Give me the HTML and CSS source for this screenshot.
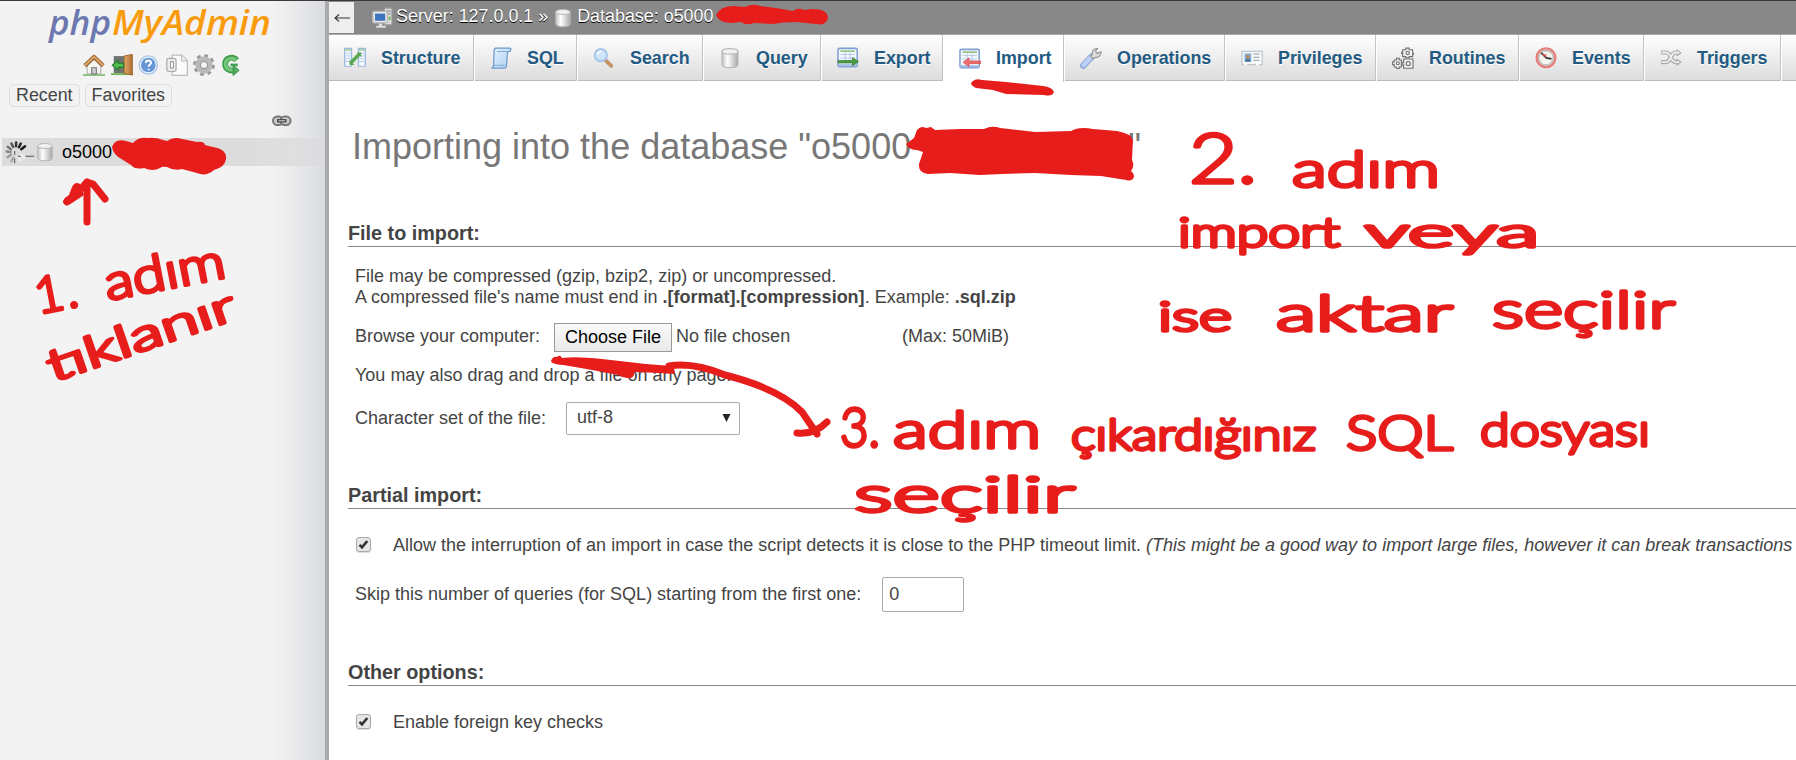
FILE: index.html
```html
<!DOCTYPE html>
<html lang="en">
<head>
<meta charset="utf-8">
<title>phpMyAdmin</title>
<link rel="stylesheet" href="styles.css">
</head>
<body>
<svg class="defs" width="0" height="0" aria-hidden="true">
  <defs>
    <linearGradient id="cyl" x1="0" x2="1" y1="0" y2="0"><stop offset="0" stop-color="#c4c4c4"/><stop offset=".35" stop-color="#fff"/><stop offset="1" stop-color="#a9a9a9"/></linearGradient>
    <linearGradient id="blue" x1="0" x2="1" y1="0" y2="1"><stop offset="0" stop-color="#eaf4ff"/><stop offset="1" stop-color="#a9cdf0"/></linearGradient>
    <linearGradient id="door" x1="0" x2="1" y1="0" y2="0"><stop offset="0" stop-color="#e3a765"/><stop offset="1" stop-color="#b0713a"/></linearGradient>
    <symbol id="db" viewBox="0 0 16 16"><path d="M2.2 3.2v9.6c0 3 11.6 3 11.6 0V3.2z" fill="url(#cyl)" stroke="#b5b5b5" stroke-width=".8"/><ellipse cx="8" cy="3.2" rx="5.8" ry="2" fill="#f1f1f1" stroke="#b9b9b9" stroke-width=".8"/></symbol>
    <symbol id="sheet" viewBox="0 0 16 16"><rect x=".7" y="1" width="14" height="13.3" rx="1" fill="#f3f8ff" stroke="#7f9fd2" stroke-width="1.1"/><path d="M2.5 3h10.5" stroke="#9bc58a" stroke-width="1.3"/><path d="M2.5 5.5h10.5M2.5 8h10.5M6 4v8M9.5 4v8" stroke="#b9cde9" stroke-width=".8"/><path d="M1.3 13.2h12.8" stroke="#a9bfe6" stroke-width="1.6"/></symbol>
  </defs>
</svg>
<div class="page">
  <aside class="nav">
    <svg class="logo" viewBox="0 0 228 34"><text class="logo-php" x="1" y="26" textLength="62" lengthAdjust="spacingAndGlyphs">php</text><text class="logo-my" x="64" y="26" textLength="159" lengthAdjust="spacingAndGlyphs">MyAdmin</text></svg>
    <div class="nav-icons">
      <svg viewBox="0 0 16 16"><path d="M0 14.8h16v1H0z" fill="#5fb34c"/><path d="M3 8v6.5h10V8L8 3.5z" fill="#f4f4f2" stroke="#a8a8a8" stroke-width=".7"/><path d="M1.3 8.6L8 2.2l6.7 6.4" fill="none" stroke="#8d5a2c" stroke-width="3" stroke-linejoin="round"/><path d="M1.3 8.4L8 2l6.7 6.4" fill="none" stroke="#d9a263" stroke-width="1.7"/><path d="M6.3 14.5V10h3.4v4.5z" fill="#cfcfcf" stroke="#777" stroke-width=".8"/></svg>
      <svg viewBox="0 0 16 16"><path d="M2 1.5h9V14H2z" fill="#6e7470"/><path d="M0 14h16v1.3H0z" fill="#6db353"/><path d="M9.5 1.5L15.5.3v15l-6-1.2z" fill="url(#door)" stroke="#9b662f" stroke-width=".7"/><path d="M1 8.2l4.2-3.7v2.2h4v3H5.200v2.200z" fill="#4fc24e" stroke="#267d2c" stroke-width=".8"/></svg>
      <svg viewBox="0 0 16 16"><circle cx="7.500" cy="8" r="6.600" fill="#edf4fd" stroke="#a9c5e8"/><circle cx="7.500" cy="8" r="5.300" fill="#6596d6"/><path d="M5.700 6.600c0-2.500 3.900-2.300 3.800-.2C9.500 7.700 7.700 7.700 7.700 9.300M7.700 10.700v1.200" fill="none" stroke="#fff" stroke-width="1.400"/></svg>
      <svg viewBox="0 0 16 16"><path d="M4.500.8h7l4 4v10.700h-11z" fill="#fbfbfb" stroke="#bdbdbd" stroke-width=".9"/><path d="M11.300.9v4.200h4" fill="#eee" stroke="#bdbdbd" stroke-width=".8"/><rect x=".6" y="3.300" width="6.700" height="9.300" rx="1.500" fill="#f2f2f2" stroke="#b0b0b0"/><rect x="3.200" y="5.600" width="2.200" height="4.600" fill="#fff" stroke="#999" stroke-width=".8"/></svg>
      <svg viewBox="0 0 16 16"><circle cx="8" cy="8" r="6.600" fill="none" stroke="#969696" stroke-width="2.600" stroke-dasharray="2.600 2.580"/><circle cx="8" cy="8" r="4.500" fill="none" stroke="#b9b9b9" stroke-width="3.600"/><circle cx="8" cy="8" r="2.600" fill="#f3f3f3" stroke="#909090" stroke-width=".8"/></svg>
      <svg viewBox="0 0 16 16"><path d="M11.500 4.500C8.500 1 3 2.800 3 7.300c0 3.600 3.200 5.200 6.500 4.600" fill="none" stroke="#3c9a48" stroke-width="4.200"/><path d="M11.300 4.600C8.500 1.500 3.200 3.200 3.200 7.300c0 3.400 3 4.800 6 4.400" fill="none" stroke="#72c878" stroke-width="2.400"/><path d="M8.800 8.300l4.400 3.600-4.400 3.800z" fill="#52ae5c" stroke="#38904a" stroke-width=".7"/><path d="M6.800 8h5.400" fill="none" stroke="#45a253" stroke-width="2"/></svg>
    </div>
    <div class="nav-buttons"><button>Recent</button><button>Favorites</button></div>
    <div class="nav-link"><svg viewBox="0 0 20 12"><rect x="1" y="1.500" width="10" height="8.500" rx="4.200" fill="#ccc" stroke="#777" stroke-width="2"/><rect x="8.500" y="1.500" width="10" height="8.500" rx="4.200" fill="#ccc" stroke="#777" stroke-width="2"/><path d="M5 5.800h9.500" stroke="#444" stroke-width="3.400"/><path d="M6.500 5.800h6.500" stroke="#ddd"/></svg></div>
    <div class="tree-row">
      <svg class="spinner" viewBox="0 0 34 28"><g stroke-width="2.600" stroke-linecap="round"><path d="M15 8V4" stroke="#333"/><path d="M18 9l2-4" stroke="#222"/><path d="M20.500 11l4-3" stroke="#111"/><path d="M12 8.500L10 5" stroke="#555"/><path d="M9.500 11L6 8.500" stroke="#777"/><path d="M9 14l-4-.5" stroke="#888"/><path d="M9.500 17L6 19.500" stroke="#999"/><path d="M12 20l-2 4" stroke="#aaa"/><path d="M20 17l4 3M18 20l2 3" stroke="#eee"/></g><path d="M13.500 13v4M13.500 21v5M17 18.500h3M25 18.500h9" stroke="#444"/></svg>
      <svg class="tree-db"><use href="#db"/></svg>
      <span>o5000</span>
    </div>
  </aside>
  <main class="main">
    <header class="crumbs">
      <button class="back"><svg viewBox="0 0 18 12"><path d="M17 6H2M6 2.500L2 6 6 9.500" fill="none" stroke="#333" stroke-width="1.100"/></svg></button>
      <svg class="server" viewBox="0 0 16 16"><path d="M9 .8h5.500V13H9z" fill="#ddd" stroke="#999" stroke-width=".8"/><path d="M10.500 3h3M10.500 5h3" stroke="#8a8a8a"/><path d="M12.800 7v2.500" stroke="#65b44f" stroke-width="1.400"/><rect x=".6" y="3.200" width="10.600" height="8.300" rx=".8" fill="#e8e8e8" stroke="#b6b6b6"/><rect x="2.200" y="4.800" width="7.400" height="5.200" fill="#3e73bd"/><path d="M5 12v1.700H3V15h7v-1.300H7.500V12z" fill="#ddd"/></svg>
      <span>Server: 127.0.0.1 »</span>
      <svg class="crumb-db"><use href="#db"/></svg>
      <span>Database: o5000</span>
    </header>
    <nav class="tabs">
      <a class="tab t-structure"><svg viewBox="0 0 16 16"><path d="M.5 1h5v13h-5zM10.500 1h5v13h-5z" fill="#f4f9ff" stroke="#9ab9df" stroke-width=".9"/><path d="M.8 2.200h4.500M10.700 2.200h4.500" stroke="#9bca8d" stroke-width="1.200"/><path d="M1 4.500h4M1 6.500h4M1 8.500h4M1 10.500h4M11 4.500h4M11 6.500h4M11 8.500h4M11 10.500h4" stroke="#b4cbe8" stroke-width=".7"/><path d="M5 11.500L11.300 5" stroke="#59a84e" stroke-width="2.600"/><path d="M4 9.500v3.500h3.500zM9.300 4h3.200v3.400z" fill="#59a84e"/></svg>Structure</a>
      <a class="tab t-sql"><svg viewBox="0 0 16 16"><path d="M3.500.8h11c1 0 1 2.500-.8 2.500h-.9L12 13.500c0 1.200-.7 1.800-1.800 1.800H1c1.200 0 1.500-1 1.600-2L3 2.500C3 1 3.500.8 4.500.8z" fill="url(#blue)" stroke="#6b9bcd" stroke-width=".9"/><path d="M5 3.300h8.500M2.500 13.300h8" stroke="#82abd7" stroke-width=".8"/></svg>SQL</a>
      <a class="tab t-search"><svg viewBox="0 0 16 16"><path d="M9 9.500l4.300 4.300" stroke="#c39468" stroke-width="2.800" stroke-linecap="round"/><circle cx="5.700" cy="5.900" r="4.500" fill="#cfe4fb" stroke="#a5c6ea" stroke-width="1.400"/><path d="M3.300 5.500c.2-1.700 1.500-2.300 3-2.200" stroke="#fff" fill="none"/></svg>Search</a>
      <a class="tab t-query"><svg><use href="#db"/></svg>Query</a>
      <a class="tab t-export"><svg viewBox="0 0 16 16"><use href="#sheet"/><path d="M.8 9.800h10.500V7.600l4.300 3-4.300 3v-2H.8z" fill="#4a9c42" stroke="#347e31" stroke-width=".5"/></svg>Export</a>
      <a class="tab active t-import"><svg viewBox="0 0 16 16"><use href="#sheet"/><path d="M15.700 9.500H7.300V7.200L3 10.400l4.300 3.100v-2.200h8.400z" fill="#f0706d" stroke="#d94d4d" stroke-width=".6"/></svg>Import</a>
      <a class="tab t-operations"><svg viewBox="0 0 16 16"><path d="M2.500 13.500L8.500 7" stroke="#8ca8dc" stroke-width="4.800" stroke-linecap="round"/><path d="M2.700 13.100L8.500 7" stroke="#bdd0f3" stroke-width="3.200" stroke-linecap="round"/><path d="M7.600 6.500L9 5.500c-.5-2.500 1-4.500 3.700-4.400L11.200 3l1.500 1.700L15.300 3.500c.3 2.600-2 4.500-4.300 4l-1.500 1.300z" fill="#ddd" stroke="#919191" stroke-width=".8"/></svg>Operations</a>
      <a class="tab t-privileges"><svg viewBox="0 0 16 16"><rect x=".7" y="3.200" width="14.700" height="9.600" fill="#f8fafc" stroke="#c5c9ce"/><path d="M2.500 4.700h5v6h-5z" fill="#79b1e2"/><circle cx="5" cy="7" r="1.500" fill="#bd8b5b"/><path d="M3 10.700c0-3 4-3 4 0z" fill="#4f6f96"/><path d="M9 5.200h4.500M9 7.500h4.500M9 9.800h4.500" stroke="#a4adb5" stroke-width=".9"/><path d="M2.500 12.500h2M11 12.500h2" stroke="#fff" stroke-width="1.500"/></svg>Privileges</a>
      <a class="tab t-routines"><svg viewBox="0 0 16 16"><g fill="#f0f0f0" stroke="#707070" stroke-width=".8"><path d="M10 .8h2.500v1.200H15v2.500h.8v1H15V7h-2.500v.8H10V7H7.800V4.700H7v-1h.8V2H10z"/><circle cx="11.400" cy="4.300" r="1.200"/><path d="M3.300 8.200h2v1.300h1.500v5H5.300v1.200h-2v-1.200H1.600v-1.700H.5v-2h1.100V9.500h1.700z"/><circle cx="4.200" cy="11.800" r="1.100"/><path d="M8.500 8.700h6.800v6.700H8.500v-2.200H7.800v-2h.7z"/><circle cx="11.800" cy="12" r="1.500"/></g></svg>Routines</a>
      <a class="tab t-events"><svg viewBox="0 0 16 16"><circle cx="8" cy="7.800" r="6.800" fill="#f5f5f0" stroke="#e77b77" stroke-width="1.700"/><circle cx="8" cy="7.800" r="5.300" fill="none" stroke="#b9b9b4"/><path d="M4.500 4.200L8.300 7.900l3.700.7" fill="none" stroke="#333" stroke-width="1.300"/><path d="M4.500 5l3 2.400 1-2z" fill="#d85850"/></svg>Events</a>
      <a class="tab t-triggers"><svg viewBox="0 0 16 16"><g fill="none"><path d="M.8 4h3.500c4 0 3 7 7.200 7H13M.8 11h3.500c4 0 3-7 7.200-7H13" stroke="#aaa" stroke-width="3"/><path d="M12 2l3 2.300-3 2.200M12 8.800l3 2.300-3 2.200" stroke="#aaa" stroke-width="1"/><path d="M1.300 4h3c4 0 3 7 7.200 7H14M1.300 11h3c4 0 3-7 7.200-7H14" stroke="#eee" stroke-width="1.300"/></g></svg>Triggers</a>
    </nav>
    <form class="content">
      <h2>Importing into the database "o5000<span class="masked"></span>"</h2>
      <section>
        <h3>File to import:</h3>
        <div class="body">
          <p class="intro">File may be compressed (gzip, bzip2, zip) or uncompressed.<br>A compressed file's name must end in <b>.[format].[compression]</b>. Example: <b>.sql.zip</b></p>
          <div class="file-row"><span>Browse your computer:</span><button type="button">Choose File</button><span class="none">No file chosen</span><span>(Max: 50MiB)</span></div>
          <p class="drop">You may also drag and drop a file on any page.</p>
          <div class="charset-row"><span>Character set of the file:</span><div class="select"><span>utf-8</span><svg viewBox="0 0 8 8"><path d="M0 0h8L4 8z" fill="#222"/></svg></div></div>
        </div>
      </section>
      <section class="partial">
        <h3>Partial import:</h3>
        <div class="body">
          <div class="check-row"><i class="check"><svg viewBox="0 0 13 13"><path d="M2.500 6.800L5 9.300 10.300 3" fill="none" stroke="#333" stroke-width="2.600"/></svg></i><span>Allow the interruption of an import in case the script detects it is close to the PHP timeout limit. <em>(This might be a good way to import large files, however it can break transactions</em></span></div>
          <div class="skip-row"><span>Skip this number of queries (for SQL) starting from the first one:</span><div class="number">0</div></div>
        </div>
      </section>
      <section class="other">
        <h3>Other options:</h3>
        <div class="body"><div class="check-row"><i class="check"><svg viewBox="0 0 13 13"><path d="M2.500 6.800L5 9.300 10.300 3" fill="none" stroke="#333" stroke-width="2.600"/></svg></i><span>Enable foreign key checks</span></div></div>
      </section>
    </form>
  </main>
</div>
<svg class="ink" viewBox="0 0 1796 760">
  <g class="ink-fill">
    <path d="M112 147q3-9 14-6l7 2q5-6 14-5 9-1 16 2l4 1q7-5 15-2l15 3q7-1 8 3l8 2q14 2 13 12-1 8-12 11-8 7-17 3l-15-4q-8 2-15-2-5-1-7 1-7 4-16 0-9 2-13-3l-8-5q-10-5-11-13z"/>
    <path d="M716 15q4-9 18-9l11 1q8-4 15-1l16 2 17 3q5-4 11-1l8-1q16 0 16 9-2 8-12 6l-20-2q-15 0-22 2l-20-1q-8 3-13-1l-10 1q-13-1-15-8z"/>
    <path d="M906 144l8-6 3-8q4-5 9-2l5-1 4 3 25-1 24 0q8-4 16-1l35 4 36-1q8-5 22-2l24 2q15 3 16 9l-1 20q3 6-1 11 3 2 3 6-2 5-8 3l-25-4-30-1-36-2-33 1-22 1-30-2-22 1q-10-1-9-10l4-12-6-2q-8 0-11-6z"/>
    <path d="M973 81q3-3 9-1l24 2 37 4q9 1 11 6-2 5-10 3l-38-1-13-4-17-2q-8-4-3-7z"/>
    <path d="M551 361q2-5 6-4 3-3 5 1 14-2 40 1l44 5 26 2q4 4 2 8l-15-1-25-1q1 7-7 6-6-1-9-3-30-6-55-10-12-1-12-4z"/>
    <path d="M63 201q2-4 6-6l3-8q3-6 8-3l4 11-12 8-4 2q-5 0-5-4z"/>
  </g>
  <g class="ink-line">
    <path d="M87 222V182M67 202l12-11 8-9 6 2 12 15"/>
    <path d="M669 366q24-4 56 9 55 14 77 37l15 22M797 433q17 2 30-11"/>
  </g>
  <g class="note">
    <g transform="rotate(-11 38 314)"><text x="38" y="314" font-size="50" textLength="43">1.</text><text x="109" y="314" font-size="50" textLength="122" lengthAdjust="spacingAndGlyphs">adım</text></g>
    <text transform="translate(53 382) rotate(-19)" font-size="44" textLength="196" lengthAdjust="spacingAndGlyphs">tıklanır</text>
    <text x="1189" y="183" font-size="68" textLength="68" lengthAdjust="spacingAndGlyphs">2.</text>
    <text x="1292" y="187" font-size="50" textLength="148" lengthAdjust="spacingAndGlyphs">adım</text>
    <text x="1178" y="247" font-size="42" textLength="162" lengthAdjust="spacingAndGlyphs">import</text>
    <text x="1365" y="247" font-size="42" textLength="174" lengthAdjust="spacingAndGlyphs">veya</text>
    <text x="1158" y="331" font-size="42" textLength="74" lengthAdjust="spacingAndGlyphs">ise</text>
    <text x="1276" y="331" font-size="50" textLength="177" lengthAdjust="spacingAndGlyphs">aktar</text>
    <text x="1492" y="328" font-size="52" textLength="183" lengthAdjust="spacingAndGlyphs">seçilir</text>
    <text x="840" y="447" font-size="55" textLength="40" lengthAdjust="spacingAndGlyphs">3.</text>
    <text x="893" y="448" font-size="52" textLength="148" lengthAdjust="spacingAndGlyphs">adım</text>
    <text x="1071" y="450" font-size="44" textLength="245" lengthAdjust="spacingAndGlyphs">çıkardığınız</text>
    <text x="1346" y="450" font-size="48" textLength="107" lengthAdjust="spacingAndGlyphs">SQL</text>
    <text x="1480" y="446" font-size="46" textLength="170" lengthAdjust="spacingAndGlyphs">dosyası</text>
    <text x="854" y="512" font-size="50" textLength="221" lengthAdjust="spacingAndGlyphs">seçilir</text>
  </g>
</svg>
</body>
</html>
```
FILE: styles.css
```css
* { box-sizing: border-box; }
html, body { margin: 0; height: 760px; overflow: hidden; }
body { position: relative; background: #fff; color: #444; font: 18px/21px "Liberation Sans", Arial, sans-serif; }
h2, h3, p { margin: 0; }
button { font: inherit; color: inherit; padding: 0; }
svg { display: block; flex: none; }
.defs { position: absolute; }
.page { display: flex; width: 1796px; height: 760px; border-top: 1px solid #3a393b; }

/* navigation panel */
.nav { flex: none; width: 329px; border-right: 4px solid #a9aaac; background: linear-gradient(to right, #f3f3f3 270px, #e7e8ea 300px, #dadbde 325px); }
.logo { width: 228px; height: 34px; margin: 8px 0 0 48px; overflow: visible; }
.logo text { font: italic 600 34px "Open Sans", sans-serif; }
.logo-php { fill: #6c78af; }
.logo-my { fill: #f89c0e; }
.nav-icons { display: flex; gap: 5.600px; margin: 11px 0 0 83px; }
.nav-icons svg { width: 22px; height: 22px; }
.nav-buttons { display: flex; gap: 5px; margin: 8px 0 0 9px; font-size: 17.860px; }
.nav-buttons button { height: 23px; padding: 0 6px; border: 1px solid #ddd; border-radius: 5px; background: #f2f2f2; line-height: 19px; }
.nav-link { margin: 8px 0 0 272px; }
.nav-link svg { width: 20px; height: 12px; }
.tree-row { display: flex; align-items: center; height: 28px; margin: 11px 0 0 2px; background: linear-gradient(to right, #dcdcdc 75%, #dfdfe0 90%, #dadbde); color: #000; }
.spinner { width: 32px; height: 28px; }
.tree-db { width: 22px; height: 20px; margin-right: 6px; }

/* server and database path */
.main { flex: 1; min-width: 0; }
.crumbs { display: flex; align-items: center; height: 33px; background: #888; color: #fff; font-size: 17.900px; text-shadow: 0 1px 0 #000; padding-bottom: 2px; }
.back { display: flex; align-items: center; justify-content: center; align-self: flex-start; width: 25px; height: 31px; margin-top: 1px; border: 0; background: #eee; }
.back svg { width: 18px; height: 12px; }
.server { width: 22px; height: 22px; margin: 2px 2px 0 18px; }
.crumb-db { width: 22px; height: 20px; margin: 3px 3px 0 4px; }

/* tabs */
.tabs { display: flex; height: 47px; background: linear-gradient(#fff, #dcdcdc); border-top: 1px solid #aaa; border-bottom: 1px solid #bbb; font-size: 17.860px; }
.tab { display: flex; flex: none; align-items: center; gap: 15px; padding-left: 15px; border-right: 1px solid #fff; box-shadow: inset -1px 0 #c4c4c4; color: #235a81; font-weight: bold; text-shadow: 0 1px 0 #fff; height: 46px; }
.tab svg { width: 22px; height: 22px; }
.tab.active { height: 47px; background: #fff; }
.t-structure { width: 146px; }
.t-sql { width: 103px; }
.t-search { width: 126px; }
.t-query { width: 118px; }
.t-export { width: 122px; }
.t-import { width: 121px; }
.t-operations { width: 161px; }
.t-privileges { width: 151px; }
.t-routines { width: 143px; }
.t-events { width: 125px; }
.t-triggers { width: 137px; }

/* import form */
.content { padding: 45px 0 0 19px; }
h2 { padding-left: 4px; color: #777; font-size: 36px; font-weight: normal; line-height: 41px; height: 40px; white-space: nowrap; }
.masked { display: inline-block; width: 217px; }
h3 { height: 25px; border-bottom: 1px solid #888; font-size: 19.800px; line-height: 22px; }
section { margin-top: 56px; }
.body { padding-left: 7px; white-space: nowrap; }
.intro { padding-top: 19px; }
.file-row { display: flex; align-items: center; height: 29px; margin-top: 15px; }
.file-row > span { padding-bottom: 2px; }
.file-row button { width: 118px; height: 29px; margin: 0 4px 0 14px; border: 1px solid #999; background: linear-gradient(#fafafa, #e9e9e9); color: #000; line-height: 25px; }
.none { width: 226px; }
.drop { margin-top: 13px; }
.charset-row { display: flex; align-items: center; height: 33px; margin-top: 16px; }
.select { display: flex; align-items: center; justify-content: space-between; width: 174px; height: 33px; margin-left: 20px; padding: 0 8px 2px 10px; border: 1px solid #aaa; border-radius: 2px; }
.select svg { width: 9px; height: 8px; }
.partial { margin-top: 49px; }
.check-row { display: flex; align-items: center; height: 21px; margin-top: 26px; }
.check { flex: none; width: 15px; height: 15px; margin: 0 22px 2px 1px; border: 1px solid #aaa; border-radius: 3px; background: #e6e6e6; box-shadow: 0 1px 1px #ddd; }
.check svg { width: 13px; height: 13px; }
.skip-row { display: flex; align-items: center; height: 35px; margin-top: 21px; }
.number { width: 82px; height: 35px; margin-left: 21px; padding-left: 6px; border: 1px solid #aaa; border-radius: 2px; line-height: 32px; }
.other { margin-top: 49px; }

/* red pen layer above the page */
.ink { position: absolute; top: 0; left: 0; width: 1796px; height: 760px; pointer-events: none; }
.ink-fill { fill: #e71d1c; }
.ink-line { fill: none; stroke: #e71d1c; stroke-width: 7; stroke-linecap: round; stroke-linejoin: round; }
.note { fill: #e71d1c; stroke: #e71d1c; stroke-width: 3.500; stroke-linejoin: round; font-family: Lato, sans-serif; font-weight: 300; }
```
